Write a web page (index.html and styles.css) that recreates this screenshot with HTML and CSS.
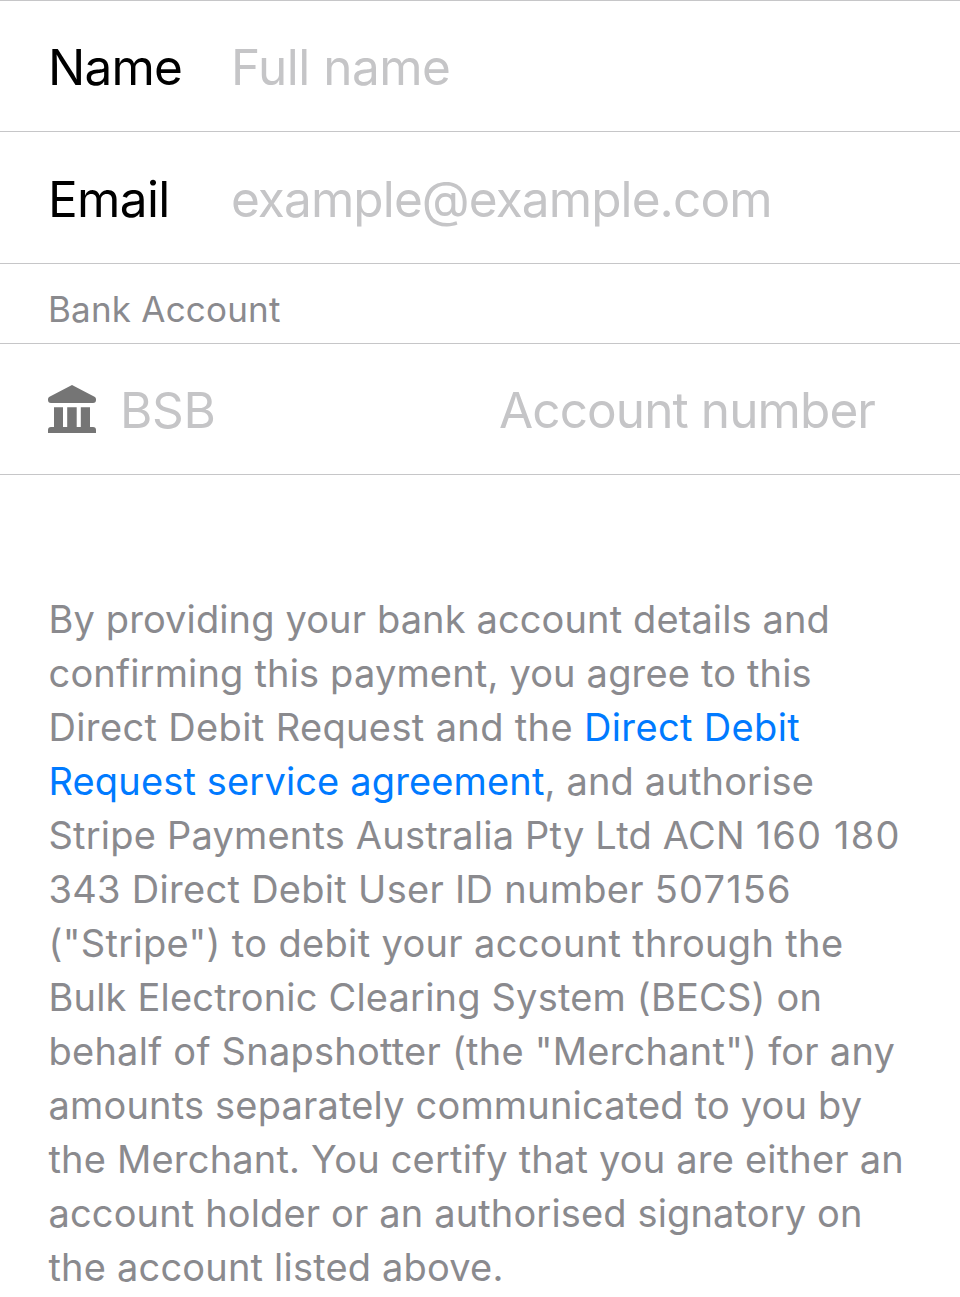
FILE: index.html
```html
<!DOCTYPE html>
<html lang="en">
<head>
<meta charset="utf-8">
<title>Direct Debit</title>
<link rel="stylesheet" href="styles.css">
</head>
<body>
<main class="form">
  <div class="row"><span class="label"><span class="t name">Name</span></span><span class="t hint fullname">Full name</span></div>
  <div class="row email-row"><span class="label"><span class="t email">Email</span></span><span class="t hint address">example@example.com</span></div>
  <div class="section"><span class="t bank-title">Bank Account</span></div>
  <div class="row bank-row">
    <svg class="bank" viewBox="0 0 48 48" fill="#757575"><path d="M24 0 46.500 11.700Q48 12.500 48 14V15Q48 18 45 18H3Q0 18 0 15V14Q0 12.500 1.500 11.700ZM6 22.300H15V42H19.200V22.300H28.700V42H32.800V22.300H42V42H45Q48 42 48 45V48H0V45Q0 42 3 42H6Z"/></svg>
    <span class="bsb-field"><span class="t hint bsb">BSB</span></span>
    <span class="t hint account">Account number</span>
  </div>
</main>
<p class="mandate">
  <span class="line l1">By providing your bank account details and</span>
  <span class="line l2">confirming this payment, you agree to this</span>
  <span class="line l3">Direct Debit Request and the <a>Direct Debit</a></span>
  <span class="line l4"><a>Request service agreement</a>, and authorise</span>
  <span class="line l5">Stripe Payments Australia Pty Ltd ACN <span class="digits">160 180</span></span>
  <span class="line l6">343 Direct Debit User ID number <span class="digits">507156</span></span>
  <span class="line l7">("Stripe") to debit your account through the</span>
  <span class="line l8">Bulk Electronic Clearing System (BECS) on</span>
  <span class="line l9">behalf of Snapshotter (the "Merchant") for any</span>
  <span class="line l10">amounts separately communicated to you by</span>
  <span class="line l11">the Merchant. You certify that you are either an</span>
  <span class="line l12">account holder or an authorised signatory on</span>
  <span class="line l13">the account listed above.</span>
</p>
</body>
</html>
```

FILE: styles.css
```css
* { box-sizing: border-box; }
body { margin: 0; background: #fff; font-family: Inter, sans-serif; overflow: hidden; }
.form { border-top: 1px solid #c6c6c8; }
.row { display: flex; align-items: center; height: 131px; padding: 2px 48px 0; border-bottom: 1px solid #c6c6c8; font-size: 49.5px; letter-spacing: -1px; }
.email-row { height: 132px; padding-top: 3px; }
.t { white-space: nowrap; }
.label { width: 183px; color: #000; }
.name { letter-spacing: -0.8px; }
.email { letter-spacing: -0.65px; }
.fullname { letter-spacing: -0.5px; }
.address { letter-spacing: -0.89px; }
.bsb { letter-spacing: -0.3px; }
.account { letter-spacing: -0.9px; }
.hint { color: #c5c5c7; }
.section { height: 80px; padding: 23px 48px 0; border-bottom: 1px solid #c6c6c8; color: #8a8a8e; font-size: 35px; line-height: 44px; letter-spacing: 0.2px; }
.bank { width: 48px; height: 48px; margin: -2px 24px 0 0; }
.bsb-field { width: 379px; }
.mandate { margin: 117px 0 0; padding-left: 48.5px; color: #8a8a8e; font-size: 38px; line-height: 54px; }
.line { display: block; width: max-content; white-space: nowrap; }
.mandate a { color: #007aff; }
.l1 { letter-spacing: 0.12px; }
.l2 { letter-spacing: 0.17px; }
.l3 { letter-spacing: 0.36px; }
.l4 { letter-spacing: 0.15px; }
.l5 { letter-spacing: 0.2px; }
.l5 .digits { letter-spacing: 1.2px; }
.l6 { letter-spacing: 0.29px; }
.l6 .digits { letter-spacing: 1.15px; }
.l7 { letter-spacing: 0.34px; }
.l8 { letter-spacing: 0.19px; }
.l9 { letter-spacing: 0.24px; }
.l10 { letter-spacing: 0.18px; }
.l11 { letter-spacing: 0.19px; }
.l12 { letter-spacing: 0.14px; }
.l13 { letter-spacing: 0.19px; }
```
